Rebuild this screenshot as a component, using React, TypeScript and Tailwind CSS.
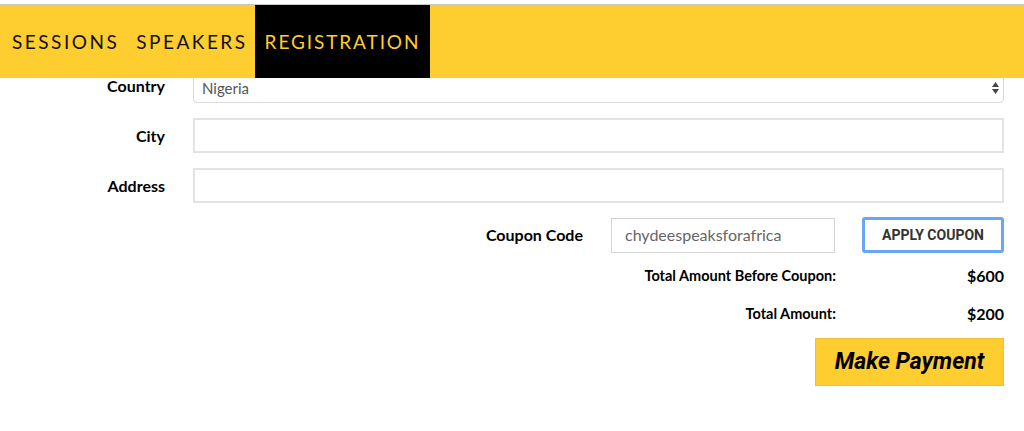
import React from 'react'

const navItems = ['SESSIONS', 'SPEAKERS', 'REGISTRATION']

function FieldRow({ label, children }: { label: string; children: React.ReactNode }) {
  return (
    <div className="flex items-center">
      <label className="w-[165px] shrink-0 text-right text-[16px] font-bold text-black">{label}</label>
      <div className="ml-[28px] flex-1">{children}</div>
    </div>
  )
}

export default function App() {
  return (
    <div className="relative min-h-[431px] bg-white" style={{ fontFamily: 'Lato, "Open Sans", sans-serif' }}>
      {/* fixed nav sits over the top of the form */}
      <header className="absolute inset-x-0 top-0 z-10 bg-white pt-[4px]">
        <nav className="flex h-[74px] items-stretch border-t border-[#c8c8c8] bg-[#fecd2f] pl-[2px]">
          {navItems.map((item) => (
            <a
              key={item}
              className={
                item === 'REGISTRATION'
                  ? 'flex items-center bg-black pl-[10px] pr-[10px] pt-[2px] text-[19px] tracking-[1.9px] text-[#fecd2f]'
                  : 'flex items-center pl-[10px] pr-[7px] pt-[2px] text-[19px] tracking-[2.5px] text-[#111]'
              }
            >
              {item}
            </a>
          ))}
        </nav>
      </header>

      <form className="flex flex-col gap-[15px] pr-[20px] pt-[69px]">
        <FieldRow label="Country">
          <div className="flex h-[34px] items-center justify-between rounded-[4px] border border-[#d9d9d9] bg-white pl-[8px] pr-[3px] text-[15px] text-[#555]">
            <span className="pt-[4px]">Nigeria</span>
            <svg width="9" height="14" viewBox="0 0 9 14" className="mt-[4px]">
              <path d="M4.5 1 L8 6 L1 6 Z" fill="#444" />
              <path d="M4.5 13 L8 8 L1 8 Z" fill="#444" />
            </svg>
          </div>
        </FieldRow>
        <FieldRow label="City">
          <div className="h-[35px] border-2 border-[#e3e3e3] bg-white" />
        </FieldRow>
        <FieldRow label="Address">
          <div className="h-[35px] border-2 border-[#e3e3e3] bg-white" />
        </FieldRow>

        <div className="mt-[-1px] flex items-center justify-end">
          <span className="text-[16px] font-bold text-black">Coupon Code</span>
          <div className="ml-[28px] flex h-[35px] w-[224px] items-center border border-[#d4d4d4] px-[13px] text-[16px] text-[#666]">
            chydeespeaksforafrica
          </div>
          <button
            type="button"
            className="ml-[27px] h-[36px] w-[142px] rounded-[3px] border-[3px] border-[#6aa5f7] bg-white text-[14px] font-bold text-[#333]"
            style={{ fontFamily: 'Roboto, sans-serif' }}
          >
            APPLY COUPON
          </button>
        </div>

        <div className="mt-[-4px] flex flex-col gap-[14px] text-[14.5px] font-bold text-black">
          <div className="flex items-center justify-end">
            <span>Total Amount Before Coupon:</span>
            <span className="w-[168px] text-right text-[16px]">$600</span>
          </div>
          <div className="flex items-center justify-end">
            <span>Total Amount:</span>
            <span className="w-[168px] text-right text-[16px]">$200</span>
          </div>
        </div>

        <div className="mt-[-3px] flex justify-end">
          <button
            type="button"
            className="h-[48px] w-[189px] border border-[#f0c030] bg-[#fecd2f] text-[23px] font-bold italic text-black"
            style={{ fontFamily: 'Roboto, sans-serif' }}
          >
            Make Payment
          </button>
        </div>
      </form>
    </div>
  )
}
